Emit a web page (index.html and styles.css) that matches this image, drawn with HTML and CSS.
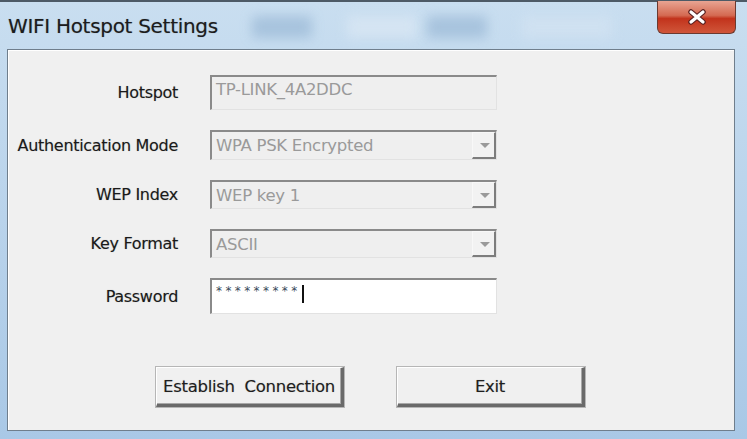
FILE: index.html
```html
<!DOCTYPE html>
<html lang="en">
<head>
    <meta charset="UTF-8">
    <title>WIFI Hotspot Settings</title>
    <link rel="stylesheet" href="styles.css">
</head>
<body>
    <div class="window">
        <div class="titlebar">
            <span class="title">WIFI Hotspot Settings</span>
            <div class="blur b1"></div>
            <div class="blur b2"></div>
            <div class="blur b3"></div>
            <div class="blur b4"></div>
            <button class="close">
                <svg width="20" height="16" viewBox="0 0 20 16">
                    <path d="M4 3 L16 13 M16 3 L4 13" stroke="#5a2020" stroke-width="5.5" stroke-linecap="round"/>
                    <path d="M4 3 L16 13 M16 3 L4 13" stroke="#ffffff" stroke-width="3.2" stroke-linecap="round"/>
                </svg>
            </button>
        </div>

        <div class="client">
            <div class="form">
                <div class="row row-hotspot">
                    <label>Hotspot</label>
                    <div class="field">TP-LINK_4A2DDC</div>
                </div>
                <div class="row row-combo">
                    <label>Authentication Mode</label>
                    <div class="field combo">WPA PSK Encrypted<span class="arrow"></span></div>
                </div>
                <div class="row row-combo row-short">
                    <label>WEP Index</label>
                    <div class="field combo">WEP key 1<span class="arrow"></span></div>
                </div>
                <div class="row row-combo row-short">
                    <label>Key Format</label>
                    <div class="field combo">ASCII<span class="arrow"></span></div>
                </div>
                <div class="row row-pass">
                    <label>Password</label>
                    <div class="field pass"><span class="dots">*********</span><span class="caret"></span></div>
                </div>
            </div>

            <div class="buttons">
                <button class="btn">Establish&nbsp; Connection</button>
                <button class="btn">Exit</button>
            </div>
        </div>
    </div>
</body>
</html>
```

FILE: styles.css
```css
html, body {
    margin: 0;
    padding: 0;
}
body {
    width: 747px;
    height: 439px;
    overflow: hidden;
    font-family: "DejaVu Sans", Tahoma, sans-serif;
    background: #b9d4ec;
}
.window {
    height: 439px;
    box-sizing: border-box;
    padding: 0 12px 0 7px;
    border-top: 2px solid #4d5a66;
    background: linear-gradient(180deg, #c9def0 0%, #bcd5ec 40%, #a9c8e6 100%);
    display: flex;
    flex-direction: column;
}
.titlebar {
    position: relative;
    height: 47px;
    flex-shrink: 0;
}
.title {
    position: relative;
    z-index: 2;
    display: block;
    padding: 12px 0 0 1px;
    font-family: "DejaVu Sans", sans-serif;
    font-size: 20px;
    color: #1c1c1c;
    letter-spacing: -0.3px;
    text-shadow: 0 0 1px rgba(0,0,0,0.35);
}
.blur {
    position: absolute;
    top: 14px;
    height: 22px;
    background: #9ab9d6;
    filter: blur(6px);
    opacity: 0.7;
}
.b1 { left: 245px; width: 60px; }
.b2 { left: 340px; width: 70px; background: #dbe8f4; }
.b3 { left: 420px; width: 60px; }
.b4 { left: 515px; width: 90px; background: #d3e3f2; }
.close {
    position: absolute;
    right: -1px;
    top: -1px;
    width: 79px;
    height: 33px;
    border: 1px solid #6b3a30;
    border-top: none;
    border-radius: 0 0 6px 6px;
    background: linear-gradient(180deg, #e8a492 0%, #d46a52 45%, #c2331c 55%, #d0563a 100%);
    display: flex;
    align-items: center;
    justify-content: center;
    padding: 0;
}
.client {
    flex: 1;
    margin-bottom: 8px;
    background: #f0f0f0;
    border: 1px solid #6f7e8c;
    box-shadow: inset 1px 1px 0 #ffffff;
    display: flex;
    flex-direction: column;
}
.form {
    padding-top: 25px;
    display: flex;
    flex-direction: column;
    gap: 20px;
}
.row {
    display: grid;
    grid-template-columns: 170px 287px;
    column-gap: 32px;
    align-items: center;
}
.row label {
    text-align: right;
    font-size: 16px;
    color: #1a1a1a;
    letter-spacing: -0.3px;
    text-shadow: 0 0 1px rgba(0,0,0,0.3);
}
.row-hotspot .field { height: 35px; align-items: flex-start; padding-top: 3px; }
.row-combo .field { height: 30px; }
.row-short .field { height: 29px; }
.row-pass .field { height: 36px; align-items: flex-start; padding-top: 3px; }
.field {
    position: relative;
    box-sizing: border-box;
    display: flex;
    align-items: center;
    padding: 0 4px;
    border-top: 2px solid #8a8a8a;
    border-left: 2px solid #8a8a8a;
    border-right: 1px solid #e2e2e2;
    border-bottom: 1px solid #e2e2e2;
    background: #efefef;
    color: #9a9a9a;
    font-size: 16.5px;
    letter-spacing: -0.3px;
}
.combo .arrow {
    position: absolute;
    right: 0;
    top: 0;
    bottom: 0;
    width: 24px;
    border-left: 1px solid #f8f8f8;
    border-top: 1px solid #f8f8f8;
    border-right: 2px solid #7d7d7d;
    border-bottom: 2px solid #7d7d7d;
    box-sizing: border-box;
    background: #f2f2f2;
}
.combo .arrow::after {
    content: "";
    position: absolute;
    left: 7px;
    top: 10px;
    border-left: 5px solid transparent;
    border-right: 5px solid transparent;
    border-top: 5px solid #9a9a9a;
}
.pass {
    background: #ffffff;
    color: #3a4a5a;
}
.dots {
    font-size: 12px;
    letter-spacing: 3.4px;
    margin-top: 1px;
}
.caret {
    display: inline-block;
    width: 2px;
    height: 18px;
    margin-left: 1px;
    margin-top: 2px;
    background: #111;
}
.buttons {
    margin-top: 53px;
    display: flex;
    gap: 53px;
    padding-left: 148px;
}
.btn {
    width: 188px;
    height: 40px;
    box-sizing: border-box;
    background: #f0f0f0;
    border-top: 1px solid #ffffff;
    border-left: 1px solid #ffffff;
    border-right: 3px solid #6a6a6a;
    border-bottom: 3px solid #6a6a6a;
    box-shadow: inset -1px -1px 0 #a8a8a8, 0 0 0 1px #b6b6b6;
    font-family: "DejaVu Sans", sans-serif;
    font-size: 16.5px;
    letter-spacing: -0.3px;
    color: #1e1e1e;
    text-shadow: 0 0 1px rgba(0,0,0,0.3);
    padding: 0;
}
```
